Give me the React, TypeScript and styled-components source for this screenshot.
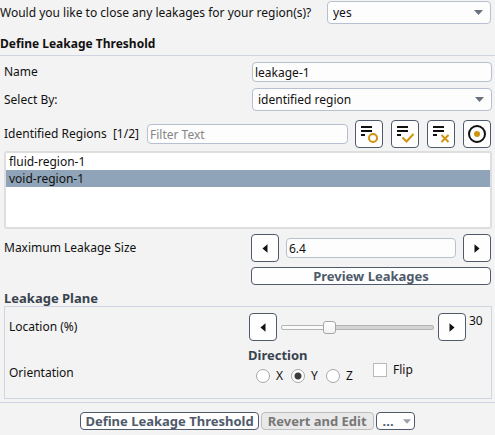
import React, { useState } from 'react';
import styled, { createGlobalStyle, css } from 'styled-components';

const slate = '#4f5b6b';
const fieldBorder = '#b7bfd0';
const rule = '#cfd5e2';
const gold = '#cf9410';

const GlobalStyle = createGlobalStyle`
  *, *::before, *::after { box-sizing: border-box; }
  body {
    margin: 0;
    background: #f3f3f3;
    color: #111;
    font: 12px/16px "Noto Sans", sans-serif;
  }
  input, select, button { font: inherit; color: inherit; margin: 0; }
`;

const Panel = styled.form`
  display: flex;
  flex-direction: column;
`;

const QuestionRow = styled.div`
  display: grid;
  grid-template-columns: 327px 1fr;
  align-items: center;
  padding: 1px 4px 0 0;
`;

const Heading = styled.h2`
  margin: 0;
  padding: 12px 0 3px;
  border-bottom: 1px solid ${rule};
  font-size: 12px;
  line-height: 16px;
`;

const Body = styled.div`
  display: flex;
  flex-direction: column;
  padding: 6px 3px 3px 4px;
`;

const FieldRow = styled.div<{ $gap?: number }>`
  display: grid;
  grid-template-columns: 248px 1fr;
  align-items: center;
  margin-bottom: ${p => p.$gap ?? 0}px;
`;

const field = css`
  width: 100%;
  min-width: 0;
  border: 1px solid ${fieldBorder};
  border-radius: 4px;
  background: #fdfdfd;
  outline: none;
`;

const TextInput = styled.input`
  ${field}
  height: 20px;
  padding: 0 2px;
  &::placeholder { color: #858585; opacity: 1; }
`;

const SelectBox = styled.div`
  display: grid;
  align-items: center;
  > * { grid-area: 1 / 1; }
  > svg { justify-self: end; margin-right: 8px; pointer-events: none; }
`;

const Select = styled.select`
  ${field}
  appearance: none;
  height: 23px;
  padding: 0 24px 0 5px;
`;

const FilterRow = styled.div`
  display: flex;
  align-items: center;
  padding-right: 1px;
  margin-bottom: 3px;
`;

const FilterLabel = styled.label`
  flex: 0 0 143px;
  white-space: pre;
`;

const IconGroup = styled.div`
  display: flex;
  gap: 8px;
  margin-left: 7px;
`;

const button = css`
  border: 1px solid ${slate};
  border-radius: 4px;
  background: #fefefe;
  padding: 0;
  display: flex;
  align-items: center;
  justify-content: center;
`;

const IconButton = styled.button`
  ${button}
  flex: none;
  width: 28px;
  height: 28px;
`;

const TextButton = styled.button<{ $menu?: boolean }>`
  ${button}
  height: 18px;
  padding: 0 ${p => (p.$menu ? 3 : 4)}px 0 ${p => (p.$menu ? 6 : 4)}px;
  gap: ${p => (p.$menu ? 9 : 0)}px;
  color: ${slate};
  font-size: 13px;
  font-weight: bold;
  white-space: nowrap;
  &:disabled {
    border-color: #bdbdbd;
    background: #e9e9e9;
    color: #777;
    padding: 0 6px;
  }
`;

const List = styled.ul`
  list-style: none;
  margin: 0 0 5px;
  padding: 0;
  height: 78px;
  border: 2px solid #dedede;
  border-radius: 3px;
  background: #fff;
`;

const Option = styled.li<{ $on: boolean }>`
  height: 17px;
  padding-left: 3px;
  line-height: 17px;
  background: ${p => (p.$on ? '#8fa4b8' : 'transparent')};
`;

const Stepper = styled.div`
  display: flex;
  align-items: center;
  gap: 7px;
  padding: 0 1px 0 0;
  margin-left: -1px;
`;

const PreviewRow = styled.div`
  display: grid;
  padding: 5px 1px 5px 247px;
`;

const Plane = styled.fieldset`
  margin: 0;
  padding: 0;
  border: 0;
  min-width: 0;
`;

const Legend = styled.legend`
  padding: 0;
  font-size: 13px;
  font-weight: bold;
  color: #39434f;
`;

const PlaneBox = styled.div`
  border: 1px solid ${rule};
  padding: 6px 4px 13px;
`;

const PlaneRow = styled.div`
  display: grid;
  grid-template-columns: 240px 1fr;
  align-items: center;
`;

const OrientationLabel = styled.span`
  padding-top: 20px;
`;

const SliderGroup = styled.div`
  display: flex;
  align-items: center;
  gap: 4px;
`;

const Slider = styled.input`
  appearance: none;
  flex: 1;
  min-width: 0;
  height: 14px;
  background: transparent;
  &::-webkit-slider-runnable-track {
    height: 5px;
    border: 1px solid #b4b4b4;
    border-radius: 2px;
    background: linear-gradient(90deg, #fafafa 30%, #d3d3d3 30%);
  }
  &::-webkit-slider-thumb {
    appearance: none;
    width: 13px;
    height: 13px;
    margin-top: -5px;
    border: 1px solid #a6a6a6;
    border-radius: 3px;
    background: linear-gradient(#fff, #f2f2f2);
  }
`;

const SliderValue = styled.output`
  align-self: flex-start;
  width: 18px;
  margin-left: -1px;
`;

const OrientationGroup = styled.div`
  display: flex;
  align-items: flex-start;
  padding-top: 6px;
`;

const Direction = styled.div`
  width: 124px;
`;

const DirectionTitle = styled.div`
  font-size: 13px;
  font-weight: bold;
  color: #39434f;
  margin-left: -1px;
`;

const Radios = styled.div`
  display: flex;
  padding: 4px 0 0 7px;
`;

const Choice = styled.label`
  display: flex;
  align-items: center;
  gap: 6px;
  width: 35px;
  line-height: 18px;
`;

const Radio = styled.input`
  appearance: none;
  flex: none;
  width: 14px;
  height: 14px;
  border: 1px solid #a8a8a8;
  border-radius: 50%;
  background: #fff;
  &:checked { background: radial-gradient(circle, #3c3c3c 3px, #fff 4px); }
`;

const FlipChoice = styled(Choice)`
  width: auto;
  padding-top: 14px;
`;

const Check = styled.input`
  appearance: none;
  width: 14px;
  height: 14px;
  border: 1px solid #b9b9b9;
  background: #fff;
  &:checked { box-shadow: inset 0 0 0 3px #fff; background: #3c3c3c; }
`;

const Footer = styled.footer`
  display: flex;
  justify-content: center;
  gap: 2px;
  padding: 9px 0 5px;
  border-top: 1px solid ${rule};
`;

const Caret = ({ color = '#68717d', width = 9 }: { color?: string; width?: number }) => (
  <svg width={width} height="5" viewBox="0 0 9 5" aria-hidden="true">
    <path d="M0 0h9L4.5 5z" fill={color} />
  </svg>
);

const Arrow = ({ right }: { right?: boolean }) => (
  <svg width="6" height="9" viewBox="0 0 6 9" aria-hidden="true">
    <path d={right ? 'M0.5 0.3v8.4L5.5 4.5z' : 'M5.5 0.3v8.4L0.5 4.5z'} fill="#111" />
  </svg>
);

const ListIcon = ({ children }: { children: React.ReactNode }) => (
  <svg width="20" height="20" viewBox="0 0 20 20" fill="none" aria-hidden="true">
    <path d="M2 3h11M2 7h11M2 11h4" stroke="#111" strokeWidth="2" />
    <g stroke={gold} strokeWidth="2">{children}</g>
  </svg>
);

const regions = ['fluid-region-1', 'void-region-1'];

export default function App() {
  const [selected, setSelected] = useState('void-region-1');
  const [location, setLocation] = useState(30);
  const [size, setSize] = useState('6.4');
  const [axis, setAxis] = useState('Y');

  const stepSize = (d: number) => setSize(s => String(Math.round((Number(s) + d) * 10) / 10));
  const stepLocation = (d: number) => setLocation(v => Math.min(100, Math.max(0, v + d)));

  return (
    <Panel onSubmit={e => e.preventDefault()}>
      <GlobalStyle />
      <QuestionRow>
        <label htmlFor="close">Would you like to close any leakages for your region(s)?</label>
        <SelectBox>
          <Select id="close" defaultValue="yes">
            <option>yes</option>
            <option>no</option>
          </Select>
          <Caret />
        </SelectBox>
      </QuestionRow>
      <Heading>Define Leakage Threshold</Heading>
      <Body>
        <FieldRow $gap={6}>
          <label htmlFor="name">Name</label>
          <TextInput id="name" defaultValue="leakage-1" />
        </FieldRow>
        <FieldRow $gap={9}>
          <label htmlFor="by">Select By:</label>
          <SelectBox>
            <Select id="by">
              <option>identified region</option>
            </Select>
            <Caret />
          </SelectBox>
        </FieldRow>
        <FilterRow>
          <FilterLabel htmlFor="filter">{'Identified Regions  [1/2]'}</FilterLabel>
          <TextInput id="filter" placeholder="Filter Text" />
          <IconGroup>
            <IconButton type="button" aria-label="Toggle filter">
              <ListIcon><circle cx="14" cy="14" r="4" /></ListIcon>
            </IconButton>
            <IconButton type="button" aria-label="Select all">
              <ListIcon><path d="M7.5 13.5l4 4L18.5 10" /></ListIcon>
            </IconButton>
            <IconButton type="button" aria-label="Deselect all">
              <ListIcon><path d="M10.5 11l7 7M17.5 11l-7 7" /></ListIcon>
            </IconButton>
            <IconButton type="button" aria-label="Highlight">
              <svg width="20" height="20" viewBox="0 0 20 20" aria-hidden="true">
                <circle cx="10" cy="10" r="8" fill="none" stroke="#111" strokeWidth="2" />
                <circle cx="10" cy="10" r="3" fill={gold} />
              </svg>
            </IconButton>
          </IconGroup>
        </FilterRow>
        <List role="listbox" aria-label="Identified Regions">
          {regions.map(r => (
            <Option key={r} role="option" aria-selected={r === selected} $on={r === selected} onClick={() => setSelected(r)}>
              {r}
            </Option>
          ))}
        </List>
        <FieldRow>
          <label htmlFor="size">Maximum Leakage Size</label>
          <Stepper>
            <IconButton type="button" aria-label="Decrease size" onClick={() => stepSize(-0.1)}><Arrow /></IconButton>
            <TextInput id="size" value={size} onChange={e => setSize(e.target.value)} />
            <IconButton type="button" aria-label="Increase size" onClick={() => stepSize(0.1)}><Arrow right /></IconButton>
          </Stepper>
        </FieldRow>
        <PreviewRow>
          <TextButton type="button">Preview Leakages</TextButton>
        </PreviewRow>
        <Plane>
          <Legend>Leakage Plane</Legend>
          <PlaneBox>
            <PlaneRow>
              <label htmlFor="location">Location (%)</label>
              <SliderGroup>
                <IconButton type="button" aria-label="Decrease location" onClick={() => stepLocation(-1)}><Arrow /></IconButton>
                <Slider id="location" type="range" value={location} onChange={e => setLocation(Number(e.target.value))} />
                <IconButton type="button" aria-label="Increase location" onClick={() => stepLocation(1)}><Arrow right /></IconButton>
                <SliderValue htmlFor="location">{location}</SliderValue>
              </SliderGroup>
            </PlaneRow>
            <PlaneRow>
              <OrientationLabel>Orientation</OrientationLabel>
              <OrientationGroup>
                <Direction role="radiogroup" aria-label="Direction">
                  <DirectionTitle>Direction</DirectionTitle>
                  <Radios>
                    {['X', 'Y', 'Z'].map(a => (
                      <Choice key={a}>
                        <Radio type="radio" name="axis" checked={axis === a} onChange={() => setAxis(a)} />
                        {a}
                      </Choice>
                    ))}
                  </Radios>
                </Direction>
                <FlipChoice>
                  <Check type="checkbox" />
                  Flip
                </FlipChoice>
              </OrientationGroup>
            </PlaneRow>
          </PlaneBox>
        </Plane>
      </Body>
      <Footer>
        <TextButton type="submit">Define Leakage Threshold</TextButton>
        <TextButton type="button" disabled>Revert and Edit</TextButton>
        <TextButton type="button" $menu aria-label="More">
          ...
          <Caret color="#98a1ad" width={8} />
        </TextButton>
      </Footer>
    </Panel>
  );
}
